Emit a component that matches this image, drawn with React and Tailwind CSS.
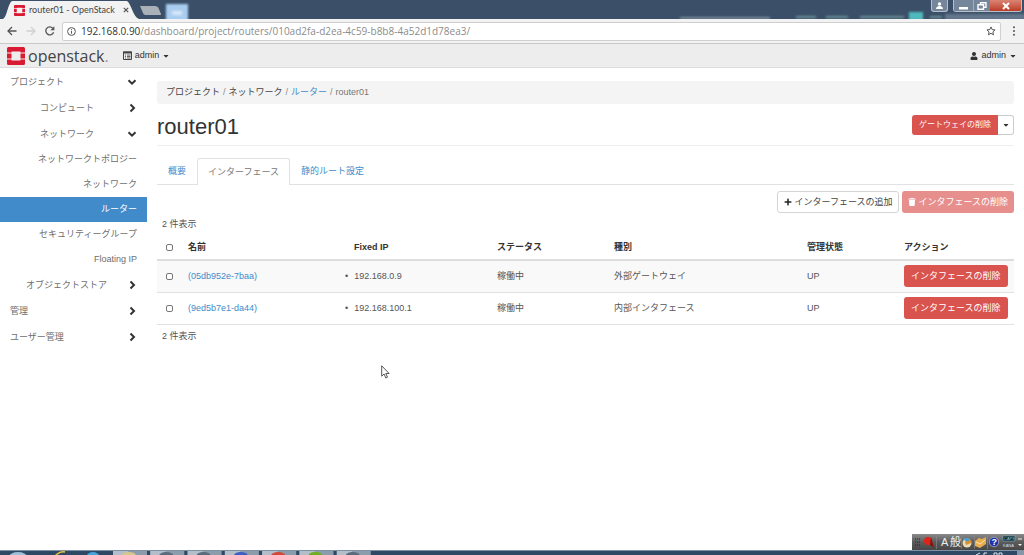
import { useState } from "react";
import clsx from "clsx";
import { FaCaretDown, FaPlus, FaTrash, FaUser } from "react-icons/fa";

const MENU = [
  { label: "プロジェクト", level: 0, open: true },
  { label: "コンピュート", level: 1 },
  { label: "ネットワーク", level: 1, open: true },
  { label: "ネットワークトポロジー", leaf: true },
  { label: "ネットワーク", leaf: true },
  { label: "ルーター", leaf: true, active: true },
  { label: "セキュリティーグループ", leaf: true },
  { label: "Floating IP", leaf: true },
  { label: "オブジェクトストア", level: 2 },
  { label: "管理", level: 0 },
  { label: "ユーザー管理", level: 0 },
];

const LEVELS = ["", "w-[84px] text-right", "w-[97px] text-right"];

const ROWS = [
  { name: "(05db952e-7baa)", ip: "192.168.0.9", status: "稼働中", type: "外部ゲートウェイ", state: "UP" },
  { name: "(9ed5b7e1-da44)", ip: "192.168.100.1", status: "稼働中", type: "内部インタフェース", state: "UP" },
];

const StackMark = ({ className }) => (
  <svg viewBox="0 0 36 36" className={className} fill="#da1a32" aria-hidden>
    <path d="M33 0H3a3 3 0 0 0-3 3v8h9V10a1 1 0 0 1 1-1h16a1 1 0 0 1 1 1v1h9V3a3 3 0 0 0-3-3Z" />
    <path d="M27 25v1a1 1 0 0 1-1 1H10a1 1 0 0 1-1-1v-1H0v8a3 3 0 0 0 3 3h30a3 3 0 0 0 3-3v-8Z" />
    <path d="M0 13h9v10H0zM27 13h9v10h-9z" />
  </svg>
);

const ProjectIcon = () => (
  <svg viewBox="0 0 9 9" className="size-[9px]" fill="none" stroke="#444" aria-hidden>
    <path d="M.5 1h8v7.500h-8z" />
    <path d="M0 1.500h9" strokeWidth="2" />
    <path d="M2 4h1m1 0h3.500M2 5.500h1m1 0h3.500M2 7h1m1 0h3.500" strokeWidth=".8" />
  </svg>
);

const Chevron = ({ open }) => (
  <svg viewBox="0 0 10 10" className="size-[10px] shrink-0" fill="none" stroke="#333" strokeWidth="2" aria-hidden>
    <path d={open ? "M1.500 3.200 5 6.700l3.500-3.500" : "M3.500 1.500 7 5 3.500 8.500"} />
  </svg>
);

/* ---------- browser window ---------- */

const TitleBar = () => (
  <div className="relative flex h-[19px] items-start justify-between overflow-hidden bg-[#3b5068]">
    {/* glass reflections */}
    <svg className="absolute inset-0 h-full w-full" aria-hidden>
      <defs>
        <filter id="soft"><feGaussianBlur stdDeviation="1.2" /></filter>
      </defs>
      <g filter="url(#soft)">
        <rect x="166" y="4" width="22" height="20" fill="#a9cdf0" />
        <rect x="172" y="11" width="10" height="4" fill="#d5e7f8" />
        <rect x="680" y="17" width="90" height="2" fill="#7d8da0" />
        <path d="M796 17h20M826 17h22M860 17h44M930 17h12" stroke="#6c9099" strokeWidth="2" />
        <rect x="909" y="12" width="14" height="8" fill="#4fb9bd" />
        <rect x="945" y="14" width="80" height="6" fill="#63768c" />
      </g>
    </svg>

    <div className="relative flex items-end self-stretch">
      <svg width="162" height="19" className="absolute left-0 top-0" aria-hidden>
        <path d="M3 19C7 17 8 3 12 1h115c4 2 6 16 12 18Z" fill="#f2f2f2" />
        <path d="M140 6h15c2 0 3 1 3.500 2l2.500 6c0 1-.5 1-1.500 1h-13c-2 0-3-.5-3.500-2Z" fill="#a9b0b8" />
      </svg>
      <div className="relative flex h-[18px] items-center pl-[14px]">
        <StackMark className="mr-1 size-[11px] shrink-0" />
        <span className="min-w-[88px] whitespace-nowrap font-['Lato',sans-serif] text-[9px] leading-[14px] text-[#444]">
          router01 - OpenStack
        </span>
        <button type="button" aria-label="タブを閉じる" className="ml-[6px]">
          <svg width="6" height="6" viewBox="0 0 6 6" stroke="#555" strokeWidth="1.200" aria-hidden>
            <path d="m.8.8 4.400 4.400m0-4.400L.8 5.200" />
          </svg>
        </button>
      </div>
    </div>

    <div className="relative flex pr-[2px]">
      <button type="button" aria-label="プロファイル" className="mr-[5px] flex h-[12px] w-[17px] items-center justify-center rounded-b-[3px] border border-t-0 border-[#b6c0cb] bg-[#75869a]">
        <svg width="9" height="8" viewBox="0 0 9 8" fill="#fff" aria-hidden>
          <circle cx="4.500" cy="2" r="1.700" /><path d="M1 7c0-4 7-4 7 0Z" />
        </svg>
      </button>
      <div className="flex h-[12px] overflow-hidden rounded-b-[3px] border border-t-0 border-[#b6c0cb]">
        <button type="button" aria-label="最小化" className="flex w-[19px] items-center justify-center bg-[#75869a]">
          <svg width="9" height="8" viewBox="0 0 9 8" aria-hidden><path d="M0 5h9v2.500H0z" fill="#fff" /></svg>
        </button>
        <button type="button" aria-label="元に戻す" className="flex w-[17px] items-center justify-center border-l border-[#a3afbc] bg-[#75869a]">
          <svg width="10" height="8" viewBox="0 0 10 8" fill="none" stroke="#fff" strokeWidth="1.400" aria-hidden>
            <path d="M1 2.700h5.500v4.500H1zM3.500 2.500V.8h5.500v4.500H7" />
          </svg>
        </button>
        <button type="button" aria-label="閉じる" className="flex w-[31px] items-center justify-center bg-gradient-to-b from-[#d98474] to-[#bd3a25]">
          <svg width="8" height="8" viewBox="0 0 8 8" stroke="#fff" strokeWidth="2" aria-hidden>
            <path d="m1 1 6 6m0-6L1 7" />
          </svg>
        </button>
      </div>
    </div>
  </div>
);

const AddressBar = () => (
  <div className="flex h-[25px] items-center border-b border-[#c9c9c9] bg-[#f2f2f2] pl-[7px] pr-[8px]">
    <button type="button" aria-label="戻る">
      <svg width="10" height="10" viewBox="0 0 10 10" fill="none" stroke="#555" strokeWidth="1.300" aria-hidden>
        <path d="M9.500 5H1.200M5 1 1 5l4 4" />
      </svg>
    </button>
    <button type="button" aria-label="進む" disabled className="ml-[9px]">
      <svg width="10" height="10" viewBox="0 0 10 10" fill="none" stroke="#d0d0d0" strokeWidth="1.300" aria-hidden>
        <path d="M.5 5h8.300M5 1l4 4-4 4" />
      </svg>
    </button>
    <button type="button" aria-label="再読み込み" className="ml-[9px]">
      <svg width="10" height="10" viewBox="0 0 10 10" fill="none" stroke="#555" strokeWidth="1.300" aria-hidden>
        <path d="M8.600 6.200A4 4 0 1 1 7.800 2.200" />
        <path d="M9.400.3v4H5.400Z" fill="#555" stroke="none" />
      </svg>
    </button>
    <div className="ml-[7px] flex h-[19px] min-w-0 flex-1 items-center rounded-[2px] border border-[#cfcfcf] bg-white px-[4px]">
      <svg width="9" height="9" viewBox="0 0 9 9" fill="none" stroke="#555" aria-hidden>
        <circle cx="4.500" cy="4.500" r="3.900" /><path d="M4.500 4v2.700M4.500 2.200v1" />
      </svg>
      <a
        href="#address"
        className="ml-[5px] flex-1 truncate font-['Open_Sans',sans-serif] text-[10px] leading-[16px] text-[#8c8c8c]"
      >
        <span className="text-[#333]">192.168.0.90</span>/dashboard/project/routers/010ad2fa-d2ea-4c59-b8b8-4a52d1d78ea3/
      </a>
      <button type="button" aria-label="ブックマーク">
        <svg width="10" height="10" viewBox="0 0 10 10" fill="none" stroke="#555" aria-hidden>
          <path d="m5 .9 1.200 2.700 2.900.3-2.200 2 .6 2.900L5 7.300 2.500 8.800l.6-2.900-2.200-2 2.900-.3Z" />
        </svg>
      </button>
    </div>
    <button type="button" aria-label="メニュー" className="ml-[11px]">
      <svg width="4" height="10" viewBox="0 0 4 10" fill="#555" aria-hidden>
        <circle cx="2" cy="1.300" r="1" /><circle cx="2" cy="5" r="1" /><circle cx="2" cy="8.700" r="1" />
      </svg>
    </button>
  </div>
);

/* ---------- dashboard ---------- */

const NavBar = () => (
  <header className="flex h-[24px] items-center border-b border-[#dcdcdc] bg-[#ededed] pl-[7px] pr-[7px] text-[#333]">
    <a href="#home" className="flex items-center gap-[3px]">
      <StackMark className="size-[18px]" />
      <span className="font-['Open_Sans',sans-serif] text-[16px] font-medium leading-[20px] text-[#444]">
        openstack<span className="text-[#999]">.</span>
      </span>
    </a>
    <button type="button" className="ml-[14px] flex items-center gap-[3px]">
      <ProjectIcon />
      admin
      <FaCaretDown className="size-[8px]" />
    </button>
    <button type="button" className="ml-auto flex items-center gap-[3px]">
      <FaUser className="size-[8px]" />
      admin
      <FaCaretDown className="size-[8px]" />
    </button>
  </header>
);

const Sidebar = () => (
  <nav className="w-[147px] shrink-0 pt-px text-[#6e6e6e]">
    {MENU.map((item, i) =>
      item.leaf ? (
        <a
          key={i}
          href="#panel"
          className={clsx(
            "flex h-[25px] items-center justify-end pr-[10px]",
            item.active && "bg-[#428bca] text-white",
          )}
        >
          {item.label}
        </a>
      ) : (
        <button
          key={i}
          type="button"
          aria-expanded={!!item.open}
          className="flex h-[26px] w-full items-center justify-between pl-[10px] pr-[10px]"
        >
          <span className={LEVELS[item.level]}>{item.label}</span>
          <Chevron open={item.open} />
        </button>
      ),
    )}
  </nav>
);

const Check = ({ label, checked, onChange }) => (
  <input
    type="checkbox"
    aria-label={label}
    checked={checked}
    onChange={onChange}
    className="block size-[7px] appearance-none rounded-[2px] border border-[#777] bg-white checked:bg-[#428bca]"
  />
);

const InterfaceTable = () => {
  const [picked, setPicked] = useState([]);
  const toggle = (name) =>
    setPicked((p) => (p.includes(name) ? p.filter((n) => n !== name) : [...p, name]));

  return (
    <table className="w-full table-fixed border-collapse text-left">
      <caption className="h-[22px] pl-[5px] text-left leading-[22px]">2 件表示</caption>
      <colgroup>
        <col className="w-[26px]" />
        <col className="w-[166px]" />
        <col className="w-[143px]" />
        <col className="w-[117px]" />
        <col className="w-[193px]" />
        <col className="w-[97px]" />
        <col className="w-[115px]" />
      </colgroup>
      <thead>
        <tr className="h-[25px] border-b-2 border-[#ddd] text-[#333]">
          <th className="pl-[9px]">
            <Check
              label="すべて選択"
              checked={picked.length === ROWS.length}
              onChange={() => setPicked(picked.length === ROWS.length ? [] : ROWS.map((r) => r.name))}
            />
          </th>
          <th className="px-[5px]">名前</th>
          <th className="px-[5px]">Fixed IP</th>
          <th className="px-[5px]">ステータス</th>
          <th className="px-[5px]">種別</th>
          <th className="px-[5px]">管理状態</th>
          <th className="px-[5px]">アクション</th>
        </tr>
      </thead>
      <tbody>
        {ROWS.map((row) => (
          <tr key={row.name} className="h-[32px] border-b border-[#e2e2e2] odd:bg-[#f9f9f9]">
            <td className="pl-[9px]">
              <Check label={row.name} checked={picked.includes(row.name)} onChange={() => toggle(row.name)} />
            </td>
            <td className="px-[5px]">
              <a href="#port" className="text-[#428bca]">{row.name}</a>
            </td>
            <td className="px-[5px]">
              <ul>
                <li className="before:-ml-[9px] before:mr-[6px] before:content-['•']">{row.ip}</li>
              </ul>
            </td>
            <td className="px-[5px]">{row.status}</td>
            <td className="px-[5px]">{row.type}</td>
            <td className="px-[5px]">{row.state}</td>
            <td className="px-[5px]">
              <button type="button" className="block h-[22px] rounded-[3px] bg-[#d9534f] px-[7px] text-white">
                インタフェースの削除
              </button>
            </td>
          </tr>
        ))}
      </tbody>
      <tfoot>
        <tr>
          <td colSpan={7} className="h-[24px] pl-[5px]">2 件表示</td>
        </tr>
      </tfoot>
    </table>
  );
};

const Main = () => (
  <main className="min-w-0 flex-1 pl-[10px] pr-[10px] pt-[13px]">
    <ol className="flex h-[23px] items-center gap-[3px] rounded-[3px] bg-[#f4f4f4] px-[9px] text-[#444]">
      <li>プロジェクト</li>
      <li className="text-[#888]">/</li>
      <li>ネットワーク</li>
      <li className="text-[#888]">/</li>
      <li><a href="#routers" className="text-[#428bca]">ルーター</a></li>
      <li className="text-[#888]">/</li>
      <li className="text-[#777]">router01</li>
    </ol>

    <div className="flex h-[42px] items-center justify-between border-b border-[#eee]">
      <h1 className="pt-1 text-[22px] leading-[26px] text-[#333]">router01</h1>
      <div className="flex h-[20px] text-[8px]">
        <button type="button" className="rounded-l-[3px] bg-[#d9534f] px-[7px] text-white">ゲートウェイの削除</button>
        <button type="button" aria-label="その他" className="flex w-[16px] items-center justify-center rounded-r-[3px] border border-l-0 border-[#ccc] bg-white text-[#333]">
          <FaCaretDown className="size-[8px]" />
        </button>
      </div>
    </div>

    <div role="tablist" className="mt-[12px] flex h-[27px] border-b border-[#e2e2e2] text-[#428bca]">
      <button type="button" role="tab" className="border border-transparent px-[10px]">概要</button>
      <button type="button" role="tab" aria-selected className="-mb-px rounded-t-[3px] border border-b-0 border-[#e2e2e2] bg-white px-[10px] text-[#777]">
        インターフェース
      </button>
      <button type="button" role="tab" className="border border-transparent px-[10px]">静的ルート設定</button>
    </div>

    <div className="mt-[6px] flex h-[22px] justify-end gap-[3px]">
      <button type="button" className="flex items-center gap-[2px] rounded-[3px] border border-[#d4d4d4] bg-white px-[6px] text-[#444]">
        <FaPlus className="size-[8px] text-[#222]" />
        インターフェースの追加
      </button>
      <button type="button" className="flex items-center gap-[2px] rounded-[3px] bg-[#e68f8c] px-[6px] text-white">
        <FaTrash className="size-[8px]" />
        インタフェースの削除
      </button>
    </div>

    <InterfaceTable />
  </main>
);

/* ---------- desktop ---------- */

const LanguageBar = () => (
  <div className="absolute bottom-[5px] right-0">
    <svg width="112" height="16" viewBox="0 0 112 16" className="block" aria-hidden>
      <defs>
        <linearGradient id="ime" x2="0" y2="1">
          <stop offset="0" stopColor="#8a8a8a" /><stop offset=".5" stopColor="#5c5c5c" /><stop offset="1" stopColor="#474747" />
        </linearGradient>
      </defs>
      <path d="M0 0h112v16H0z" fill="url(#ime)" />
      <path d="M3 5h6M3 8h6M3 11h6" stroke="#222" strokeDasharray="1 1" />
      <path d="M24.500 1v14M49.500 1v14M62.500 1v14M75.500 1v14" stroke="#8f8f8f" strokeWidth=".6" />
      <circle cx="16" cy="7" r="4" fill="#dd2418" />
      <path d="m19 3 3 11-4-3Z" fill="#811" />
      <text x="29" y="12" fill="#eee" fontSize="11" fontFamily="Liberation Sans, sans-serif">A</text>
      <text x="38" y="12" fill="#eee" fontSize="11" fontFamily="Noto Sans CJK JP, sans-serif">般</text>
      <circle cx="55" cy="9" r="4.500" fill="#e8dcb0" />
      <path d="M51 4h5l3 3-4 2Z" fill="#4c9ed0" /><path d="m53 8 6-2v3l-5 2Z" fill="#d9902e" />
      <path d="m63 7 4-3 3 1 4-2v7l-6 4-5-2Z" fill="#e9ad4d" /><path d="m64 8 4 2 5-4" fill="none" stroke="#fbe5b0" />
      <circle cx="82" cy="8" r="4.700" fill="#1d31ac" stroke="#dfe4f5" strokeWidth=".5" />
      <text x="79.500" y="11.300" fill="#fff" fontSize="9" fontWeight="bold" fontFamily="Liberation Sans, sans-serif">?</text>
      <path d="M91 2h12v5H91z" fill="#15252c" stroke="#6fb1cb" strokeWidth=".6" />
      <text x="92" y="6" fill="#8ccce4" fontSize="4" fontFamily="Liberation Sans, sans-serif">CAPS</text>
      <text x="91" y="13" fill="#ddd" fontSize="4" fontFamily="Liberation Sans, sans-serif">KANA</text>
      <path d="M106 5h4" stroke="#eee" />
      <path d="M106 10h4l-2 2Z" fill="#eee" />
    </svg>
  </div>
);

const TASKS = ["#d8c98a", "#5b6c7d", "#5b6c7d", "#3f5fc4", "#d14a3a", "#6fae1c", "#5b6c7d"];

const TaskBar = () => (
  <footer className="relative h-[5px] border-t border-[#7f92a5] bg-[#2d4964]">
    <svg width="372" height="4" className="block" aria-hidden>
      <ellipse cx="18" cy="6" rx="9" ry="5" fill="#9fc0d8" />
      <path d="M55 5q5-5 10-4" stroke="#e2c23c" strokeWidth="1.500" fill="none" />
      <ellipse cx="93" cy="5" rx="6" ry="4" fill="#43a5da" />
      {TASKS.map((fill, i) => (
        <g key={i} transform={`translate(${113 + i * 37.300} 0)`}>
          <path d="M0 0h34v4H0z" fill="#8b9cab" />
          <path d="M0 0h16L10 4H0z" fill="#b3bec8" />
          <ellipse cx="16" cy="4.500" rx="7" ry="3.500" fill={fill} />
        </g>
      ))}
    </svg>
    <svg width="48" height="4" className="absolute right-0 top-0" aria-hidden>
      <path d="M0 4 4 2M8 4V2h3M18 4V2h3v2M23 4V2h3v2" stroke="#dfe6ec" fill="none" />
      <path d="M41 0h7v4h-7z" fill="#8596a6" />
    </svg>
    <LanguageBar />
  </footer>
);

const Pointer = () => (
  <svg width="9" height="14" viewBox="0 0 9 14" className="pointer-events-none absolute left-[381px] top-[365px]" aria-hidden>
    <path d="M.7.8v10.400l2.400-2.200 1.700 4 1.700-.8-1.700-3.700h3.300Z" fill="#fff" stroke="#444" strokeWidth=".9" />
  </svg>
);

export default function App() {
  return (
    <div
      lang="ja"
      className="relative flex min-h-screen flex-col bg-white font-['Liberation_Sans','Noto_Sans_CJK_JP',sans-serif] text-[9px] leading-[13px] text-[#555]"
    >
      <TitleBar />
      <AddressBar />
      <NavBar />
      <div className="flex flex-1">
        <Sidebar />
        <Main />
      </div>
      <TaskBar />
      <Pointer />
    </div>
  );
}
